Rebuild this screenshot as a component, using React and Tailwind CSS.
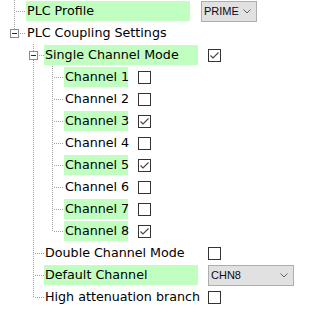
import React from "react";

const DOT = "#a0a0a0";

function VLine({ y1, y2 }) {
  return <line x1="9.5" y1={y1} x2="9.5" y2={y2} stroke={DOT} strokeDasharray="1 1" />;
}
function HLine({ x1 }) {
  return <line x1={x1} y1="11.5" x2="21" y2="11.5" stroke={DOT} strokeDasharray="1 1" />;
}

function Cell({ type }) {
  return (
    <svg width="19" height="22" className="block shrink-0 overflow-visible" shapeRendering="crispEdges">
      {type === "pipe" && <VLine y1={0} y2={22} />}
      {type === "tee" && (
        <>
          <VLine y1={0} y2={22} />
          <HLine x1={11} />
        </>
      )}
      {type === "elbow" && (
        <>
          <VLine y1={0} y2={12} />
          <HLine x1={11} />
        </>
      )}
      {(type === "boxTee" || type === "boxElbow") && (
        <>
          <VLine y1={0} y2={7} />
          {type === "boxTee" && <VLine y1={16} y2={22} />}
          <HLine x1={15} />
          <rect x="5.5" y="7.5" width="8" height="8" fill="#ffffff" stroke="#8c8c8c" />
          <line x1="7" y1="11.5" x2="12" y2="11.5" stroke="#2a2a2a" />
        </>
      )}
    </svg>
  );
}

function Check({ checked }) {
  return (
    <div className="w-[13px] h-[13px] border border-[#333333] bg-white shrink-0 relative">
      {checked && (
        <svg width="11" height="11" className="absolute left-0 top-0">
          <polyline points="1.5,5.5 4,8 9.5,2.5" fill="none" stroke="#444444" strokeWidth="1.1" />
        </svg>
      )}
    </div>
  );
}

function Select({ text, w }) {
  return (
    <div
      className={`${w} h-[21px] self-start border border-[#adadad] bg-[#e1e1e1] flex items-center justify-between pl-[2px] pr-[5px]`}
      style={{ fontFamily: '"Liberation Sans", Arial, sans-serif' }}
    >
      <span className="text-[11px] text-[#0a0a20] leading-none">{text}</span>
      <svg width="8" height="5" className="block">
        <polyline points="0.5,0.5 4,4 7.5,0.5" fill="none" stroke="#606060" />
      </svg>
    </div>
  );
}

const LEVEL = {
  0: { label: "ml-[2px] w-[164px]", gap: "ml-[11px]" },
  1: { label: "ml-[1px] w-[154px]", gap: "ml-[10px]" },
  2: { label: "ml-[2px] w-[64px]", gap: "ml-[10px]" },
};

function Row({ cells, level, label, green, value }) {
  const L = LEVEL[level];
  return (
    <div className="flex items-center h-[22px]">
      <div className="flex pl-[5px] self-start">
        {cells.map((c, i) => (
          <Cell key={i} type={c} />
        ))}
      </div>
      <div
        className={`${L.label} h-[20px] flex items-center pl-[1px] whitespace-nowrap shrink-0 ${green ? "bg-[#c0ffc0]" : ""}`}
      >
        {label}
      </div>
      {value && <div className={`${L.gap} flex items-center`}>{value}</div>}
    </div>
  );
}

export default function App() {
  const channels = [
    { n: 1, green: true, checked: false },
    { n: 2, green: false, checked: false },
    { n: 3, green: true, checked: true },
    { n: 4, green: false, checked: false },
    { n: 5, green: true, checked: true },
    { n: 6, green: false, checked: false },
    { n: 7, green: true, checked: false },
    { n: 8, green: true, checked: true },
  ];
  return (
    <div
      className="w-[309px] h-[312px] bg-white text-black text-[12.7px] overflow-hidden"
      style={{ fontFamily: '"DejaVu Sans", Verdana, sans-serif' }}
    >
      <Row cells={["tee"]} level={0} label="PLC Profile" green value={<Select text="PRIME" w="w-[56px]" />} />
      <Row cells={["boxElbow"]} level={0} label="PLC Coupling Settings" />
      <Row
        cells={["blank", "boxTee"]}
        level={1}
        label="Single Channel Mode"
        green
        value={<Check checked />}
      />
      {channels.map((c) => (
        <Row
          key={c.n}
          cells={["blank", "pipe", c.n === 8 ? "elbow" : "tee"]}
          level={2}
          label={`Channel ${c.n}`}
          green={c.green}
          value={<Check checked={c.checked} />}
        />
      ))}
      <Row cells={["blank", "tee"]} level={1} label="Double Channel Mode" value={<Check />} />
      <Row
        cells={["blank", "tee"]}
        level={1}
        label="Default Channel"
        green
        value={<Select text="CHN8" w="w-[86px]" />}
      />
      <Row cells={["blank", "elbow"]} level={1} label="High attenuation branch" value={<Check />} />
    </div>
  );
}
